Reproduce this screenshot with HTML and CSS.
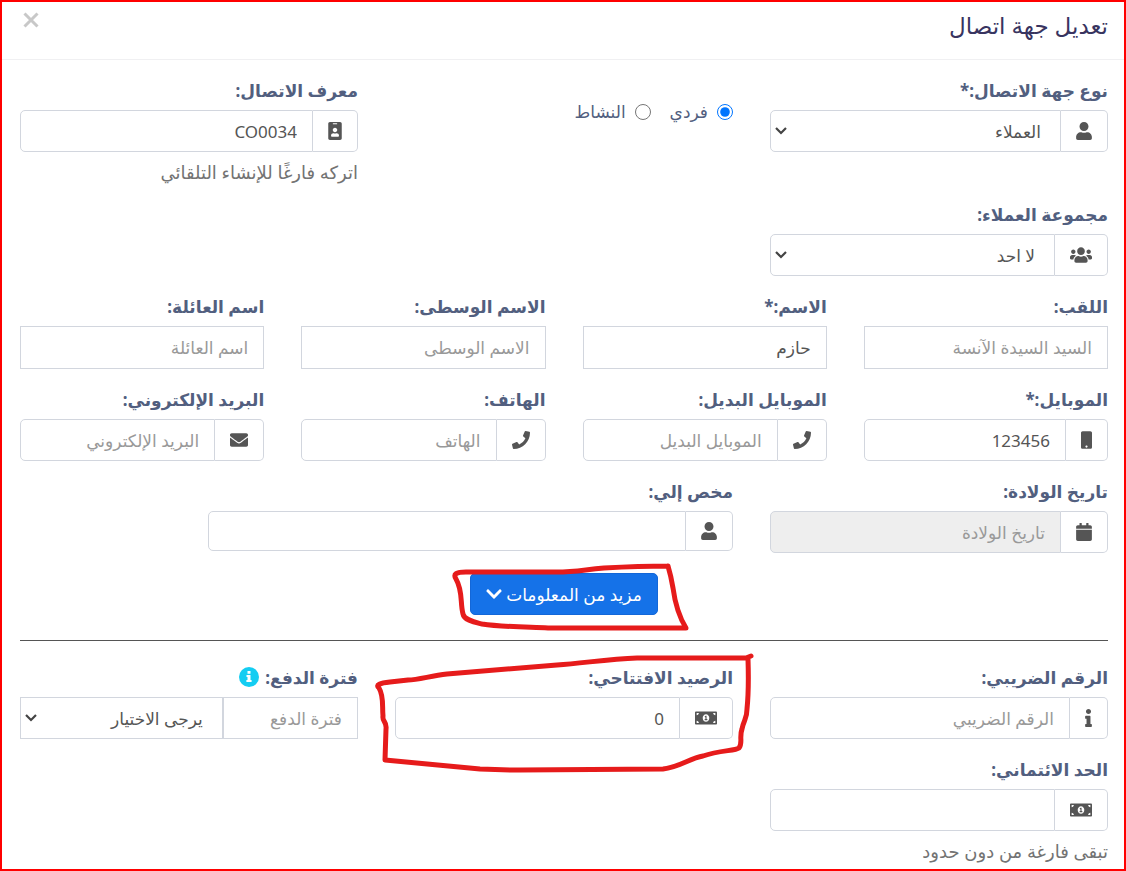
FILE: index.html
```html
<!DOCTYPE html>
<html lang="ar" dir="rtl">
<head>
<meta charset="utf-8">
<meta name="viewport" content="width=device-width, initial-scale=1">
<title>تعديل جهة اتصال</title>
<link rel="stylesheet" href="styles.css">
</head>
<body>
<svg class="sprite" aria-hidden="true">
  <symbol id="user" viewBox="0 0 448 512"><path d="M224 256c70.7 0 128-57.3 128-128S294.7 0 224 0 96 57.3 96 128s57.3 128 128 128zm89.6 32h-16.7c-22.2 10.2-46.9 16-72.9 16s-50.6-5.8-72.9-16h-16.7C60.2 288 0 348.2 0 422.4V464c0 26.5 21.500 48 48 48h352c26.500 0 48-21.500 48-48v-41.600c0-74.200-60.200-134.400-134.400-134.400z"/></symbol>
  <symbol id="users" viewBox="0 0 640 512"><path d="M96 224c35.3 0 64-28.7 64-64s-28.7-64-64-64-64 28.7-64 64 28.7 64 64 64zm448 0c35.3 0 64-28.7 64-64s-28.7-64-64-64-64 28.7-64 64 28.7 64 64 64zm32 32h-64c-17.6 0-33.5 7.1-45.1 18.6 40.3 22.1 68.9 62 75.1 109.4h66c17.7 0 32-14.3 32-32v-32c0-35.3-28.7-64-64-64zm-256 0c61.9 0 112-50.1 112-112S381.9 32 320 32 208 82.1 208 144s50.1 112 112 112zm76.800 32h-8.300c-20.800 10-43.900 16-68.500 16s-47.600-6-68.500-16h-8.300C179.600 288 128 339.600 128 403.200V432c0 26.500 21.500 48 48 48h288c26.500 0 48-21.500 48-48v-28.800c0-63.600-51.600-115.200-115.200-115.200zm-223.700-13.400C161.500 263.100 145.600 256 128 256H64c-35.300 0-64 28.700-64 64v32c0 17.700 14.300 32 32 32h65.900c6.300-47.400 34.900-87.300 75.200-109.400z"/></symbol>
  <symbol id="badge" viewBox="0 0 384 512"><path d="M336 0H48C21.500 0 0 21.500 0 48v416c0 26.500 21.500 48 48 48h288c26.500 0 48-21.500 48-48V48c0-26.500-21.500-48-48-48zM144 32h96c8.800 0 16 7.200 16 16s-7.200 16-16 16h-96c-8.800 0-16-7.200-16-16s7.200-16 16-16zm48 128c35.300 0 64 28.700 64 64s-28.700 64-64 64-64-28.700-64-64 28.700-64 64-64zm112 236.800c0 10.600-10 19.200-22.400 19.200H102.400C90 416 80 407.400 80 396.800v-19.200c0-31.800 30.100-57.600 67.200-57.600h5c12.300 5.100 25.700 8 39.800 8s27.600-2.900 39.800-8h5c37.100 0 67.200 25.800 67.200 57.600v19.200z"/></symbol>
  <symbol id="mobile" viewBox="0 0 320 512"><path d="M272 0H48C21.500 0 0 21.500 0 48v416c0 26.500 21.500 48 48 48h224c26.500 0 48-21.500 48-48V48c0-26.500-21.500-48-48-48zM160 480c-17.700 0-32-14.300-32-32s14.300-32 32-32 32 14.300 32 32-14.300 32-32 32z"/></symbol>
  <symbol id="phone" viewBox="0 0 512 512"><path d="M493.400 24.600l-104-24c-11.300-2.600-22.900 3.300-27.500 13.900l-48 112c-4.200 9.800-1.400 21.300 6.900 28l60.600 49.600c-36 76.700-98.900 140.500-177.200 177.200l-49.600-60.600c-6.800-8.300-18.200-11.100-28-6.900l-112 48C3.900 366.500-2 378.100.6 389.400l24 104C27.100 504.200 36.700 512 48 512c256.100 0 464-207.500 464-464 0-11.200-7.700-20.900-18.600-23.400z"/></symbol>
  <symbol id="envelope" viewBox="0 0 512 512"><path d="M502.300 190.800c3.900-3.100 9.700-.2 9.700 4.700V400c0 26.500-21.500 48-48 48H48c-26.500 0-48-21.500-48-48V195.600c0-5 5.700-7.800 9.700-4.700 22.400 17.400 52.100 39.500 154.100 113.600 21.100 15.400 56.700 47.800 92.200 47.600 35.700.3 72-32.800 92.300-47.600 102-74.100 131.600-96.300 154-113.700zM256 320c23.200.4 56.600-29.200 73.400-41.400 132.700-96.300 142.800-104.700 173.400-128.700 5.800-4.500 9.200-11.500 9.200-18.900v-19c0-26.500-21.500-48-48-48H48c-26.500 0-48 21.500-48 48v19c0 7.400 3.400 14.300 9.200 18.900 30.600 23.900 40.700 32.400 173.400 128.700 16.800 12.200 50.200 41.800 73.400 41.400z"/></symbol>
  <symbol id="calendar" viewBox="0 0 448 512"><path d="M0 192h448v272c0 26.500-21.500 48-48 48H48c-26.500 0-48-21.500-48-48zm448-32v-48c0-26.500-21.500-48-48-48h-48V12c0-6.600-5.400-12-12-12h-40c-6.600 0-12 5.400-12 12v52H160V12c0-6.600-5.400-12-12-12h-40c-6.600 0-12 5.400-12 12v52H48C21.500 64 0 85.500 0 112v48z"/></symbol>
  <symbol id="info" viewBox="0 0 192 512"><path d="M20 424h20V280H20c-11 0-20-9-20-20v-48c0-11 9-20 20-20h112c11 0 20 9 20 20v212h20c11 0 20 9 20 20v48c0 11-9 20-20 20H20c-11 0-20-9-20-20v-48c0-11 9-20 20-20zM96 0C56.200 0 24 32.200 24 72s32.200 72 72 72 72-32.200 72-72S135.800 0 96 0z"/></symbol>
  <symbol id="money" viewBox="0 0 640 512"><path d="M352 288h-16v-88c0-4.420-3.580-8-8-8h-13.580c-4.740 0-9.370 1.400-13.310 4.030l-15.330 10.220a8 8 0 0 0-2.220 11.090l8.880 13.310a8 8 0 0 0 11.090 2.220l.47-.31V288h-16c-4.420 0-8 3.580-8 8v16c0 4.420 3.580 8 8 8h64c4.420 0 8-3.580 8-8v-16c0-4.420-3.580-8-8-8zM608 64H32C14.330 64 0 78.330 0 96v320c0 17.670 14.330 32 32 32h576c17.670 0 32-14.330 32-32V96c0-17.670-14.330-32-32-32zM48 400v-64c35.350 0 64 28.650 64 64H48zm0-224v-64h64c0 35.350-28.650 64-64 64zm272 192c-53.020 0-96-50.150-96-112 0-61.860 42.980-112 96-112s96 50.130 96 112c0 61.870-43 112-96 112zm272 32h-64c0-35.350 28.650-64 64-64v64zm0-224c-35.350 0-64-28.650-64-64h64v64z"/></symbol>
  <symbol id="chevron" viewBox="0 0 448 512"><path d="M207 381.500L12.700 187.100c-9.400-9.400-9.400-24.500 0-33.900l22.700-22.700c9.300-9.300 24.500-9.300 33.900 0L224 284.500l154.700-154c9.400-9.300 24.600-9.300 33.900 0l22.700 22.700c9.400 9.400 9.400 24.500 0 33.900L241 381.500c-9.400 9.400-24.600 9.400-34 0z"/></symbol>
</svg>

<main class="modal">
  <header class="modal-header">
    <h1 class="modal-title">تعديل جهة اتصال</h1>
    <button class="close" type="button" aria-label="إغلاق"><svg class="close-icon" viewBox="0 0 16 16"><path d="M1.500 1.500l13 13M14.500 1.500l-13 13"/></svg></button>
  </header>

  <form class="modal-body">
    <div class="grid">
      <div class="field third">
        <label for="type">نوع جهة الاتصال:*</label>
        <div class="group">
          <span class="addon"><svg class="icon w16"><use href="#user"/></svg></span>
          <select id="type" class="control"><option>العملاء</option></select>
        </div>
      </div>
      <div class="third radios">
        <label class="radio"><input type="radio" name="kind" checked>فردي</label>
        <label class="radio"><input type="radio" name="kind">النشاط</label>
      </div>
      <div class="field third">
        <label for="cid">معرف الاتصال:</label>
        <div class="group">
          <span class="addon"><svg class="icon w14"><use href="#badge"/></svg></span>
          <input id="cid" class="control" type="text" value="CO0034">
        </div>
        <p class="help">اتركه فارغًا للإنشاء التلقائي</p>
      </div>

      <div class="field third row-start">
        <label for="cgroup">مجموعة العملاء:</label>
        <div class="group">
          <span class="addon"><svg class="icon w22"><use href="#users"/></svg></span>
          <select id="cgroup" class="control"><option>لا احد</option></select>
        </div>
      </div>

      <div class="field quarter row-start">
        <label for="prefix">اللقب:</label>
        <input id="prefix" class="control" type="text" placeholder="السيد السيدة الآنسة">
      </div>
      <div class="field quarter">
        <label for="first">الاسم:*</label>
        <input id="first" class="control" type="text" value="حازم">
      </div>
      <div class="field quarter">
        <label for="middle">الاسم الوسطى:</label>
        <input id="middle" class="control" type="text" placeholder="الاسم الوسطى">
      </div>
      <div class="field quarter">
        <label for="last">اسم العائلة:</label>
        <input id="last" class="control" type="text" placeholder="اسم العائلة">
      </div>

      <div class="field quarter">
        <label for="mob">الموبايل:*</label>
        <div class="group">
          <span class="addon"><svg class="icon w11"><use href="#mobile"/></svg></span>
          <input id="mob" class="control" type="text" value="123456">
        </div>
      </div>
      <div class="field quarter">
        <label for="alt">الموبايل البديل:</label>
        <div class="group">
          <span class="addon"><svg class="icon w18"><use href="#phone"/></svg></span>
          <input id="alt" class="control" type="text" placeholder="الموبايل البديل">
        </div>
      </div>
      <div class="field quarter">
        <label for="tel">الهاتف:</label>
        <div class="group">
          <span class="addon"><svg class="icon w18"><use href="#phone"/></svg></span>
          <input id="tel" class="control" type="text" placeholder="الهاتف">
        </div>
      </div>
      <div class="field quarter">
        <label for="mail">البريد الإلكتروني:</label>
        <div class="group">
          <span class="addon"><svg class="icon w18"><use href="#envelope"/></svg></span>
          <input id="mail" class="control" type="text" placeholder="البريد الإلكتروني">
        </div>
      </div>

      <div class="field third">
        <label for="dob">تاريخ الولادة:</label>
        <div class="group">
          <span class="addon"><svg class="icon w16"><use href="#calendar"/></svg></span>
          <input id="dob" class="control" type="text" placeholder="تاريخ الولادة" readonly>
        </div>
      </div>
      <div class="field half">
        <label for="assigned">مخص إلي:</label>
        <div class="group short">
          <span class="addon"><svg class="icon w16"><use href="#user"/></svg></span>
          <input id="assigned" class="control" type="text">
        </div>
      </div>
    </div>

    <div class="more">
      <div class="marked">
        <button class="btn" type="button">مزيد من المعلومات <svg class="chevron"><use href="#chevron"/></svg></button>
        <svg class="mark mark-button" viewBox="0 0 246 70" aria-hidden="true"><path d="M218 5C190 5 172 6 154 7C132 9 126 11 106 11H16C6 11 3 13 6 18C13 30 10 42 13 53C14 59 24 61 32 63C52 66 76 66 98 67H236C228 54 225 42 223 27Q221 15 218 5"/></svg>
      </div>
    </div>

    <hr class="rule">

    <div class="grid">
      <div class="field third">
        <label for="tax">الرقم الضريبي:</label>
        <div class="group">
          <span class="addon"><svg class="icon w7"><use href="#info"/></svg></span>
          <input id="tax" class="control" type="text" placeholder="الرقم الضريبي">
        </div>
      </div>
      <div class="field third marked">
        <label for="opening">الرصيد الافتتاحي:</label>
        <div class="group">
          <span class="addon"><svg class="icon w22"><use href="#money"/></svg></span>
          <input id="opening" class="control" type="text" value="0">
        </div>
        <svg class="mark mark-field" viewBox="0 0 390 130" aria-hidden="true"><path d="M381 7L376 9H267C238 10 215 14 187 16L77 25C60 27 48 31 38 31L20 33C10 34 5 36 9 39C14 47 12 57 13 67C12 73 17 72 16 80L15 111L110 120Q130 121 150 121L293 120C310 118 320 109 333 107C350 101 365 102 369 99C373 94 369 88 372 80C374 70 377 70 377 60Q379 40 378 10"/></svg>
      </div>
      <div class="field third">
        <div class="label-row">
          <label for="term">فترة الدفع:</label>
          <svg class="tip" viewBox="0 0 20 20" role="img" aria-label="معلومات"><circle cx="10" cy="10" r="10" fill="#14cdf2"/><path fill="#fff" d="M8.500 4h3v2.800h-3zM7.500 8h4v5h1.100v2H7.400v-2h1.100V10h-1z"/></svg>
        </div>
        <div class="pair">
          <input id="term" class="control" type="text" placeholder="فترة الدفع">
          <select class="control" aria-label="نوع الفترة"><option>يرجى الاختيار</option></select>
        </div>
      </div>
      <div class="field third row-start">
        <label for="limit">الحد الائتماني:</label>
        <div class="group">
          <span class="addon"><svg class="icon w22"><use href="#money"/></svg></span>
          <input id="limit" class="control" type="text">
        </div>
        <p class="help">تبقى فارغة من دون حدود</p>
      </div>
    </div>
  </form>
</main>
</body>
</html>
```

FILE: styles.css
```css
* { box-sizing: border-box; }

body {
  margin: 0;
  background: #fff;
  color: #555;
  font-family: "Noto Sans", "DejaVu Sans", sans-serif;
  font-size: 17px;
  line-height: 24px;
}

.sprite { display: none; }

.modal {
  min-height: 100vh;
  border: 2px solid #f00;
}

.modal-header {
  display: flex;
  justify-content: space-between;
  align-items: flex-start;
  padding: 7px 16px 18px 18px;
  border-bottom: 1px solid #f0f0f2;
}

.modal-title {
  margin: 0;
  color: #38345f;
  font-size: 23px;
  font-weight: 400;
  line-height: 32px;
}

.close {
  display: flex;
  padding: 3px;
  border: 0;
  background: none;
}

.close-icon {
  width: 16px;
  height: 16px;
  fill: none;
  stroke: #c8c8c8;
  stroke-width: 3;
}

.modal-body { padding: 19px 16px 4px 18px; }

.grid {
  display: grid;
  grid-template-columns: repeat(12, minmax(0, 1fr));
  column-gap: 37px;
  row-gap: 19px;
}

.third { grid-column: span 4; }
.quarter { grid-column: span 3; }
.half { grid-column: span 6; }
.third.row-start { grid-column: 1 / span 4; }
.quarter.row-start { grid-column: 1 / span 3; }

.field label {
  display: block;
  margin-bottom: 7px;
  color: #525f7f;
  font-weight: 700;
  white-space: nowrap;
}

.label-row {
  display: flex;
  align-items: flex-start;
  gap: 6px;
}

.tip {
  width: 20px;
  height: 20px;
  margin-top: 1px;
}

.group,
.pair {
  display: flex;
  height: 42px;
}

.group.short { height: 40px; }

.control {
  width: 100%;
  min-width: 0;
  height: 43px;
  margin: 0;
  padding: 0 15px;
  border: 1px solid #d2d6de;
  border-radius: 0;
  outline: 0;
  background-color: #fff;
  color: #555;
  font-family: inherit;
  font-size: 17px;
}

.control::placeholder { color: #999; opacity: 1; }
.control:read-only:not(select) { background-color: #eee; }

select.control {
  appearance: none;
  padding: 0 19px;
  background-image: url("data:image/svg+xml,%3Csvg xmlns='http://www.w3.org/2000/svg' viewBox='0 0 12 8'%3E%3Cpath d='M1 1l5 5 5-5' fill='none' stroke='%23444' stroke-width='2.200'/%3E%3C/svg%3E");
  background-position: left 4px center;
  background-repeat: no-repeat;
  background-size: 12px 8px;
}

.group .control {
  flex: 1;
  width: auto;
  height: 100%;
  border-radius: 5px 0 0 5px;
}

.addon {
  display: flex;
  align-items: center;
  padding: 0 15px;
  border: 1px solid #d2d6de;
  border-left: 0;
  border-radius: 0 5px 5px 0;
}

.icon { height: 18px; fill: #555; }
.w7 { width: 7px; }
.w11 { width: 11px; }
.w14 { width: 14px; }
.w16 { width: 16px; }
.w18 { width: 18px; }
.w22 { width: 22px; }

.pair .control { height: 100%; }
.pair input { width: 40%; }
.pair select { width: 60%; }

.radios {
  display: flex;
  align-items: flex-start;
  gap: 19px;
  padding-top: 21px;
}

.radio {
  display: flex;
  align-items: center;
  gap: 9px;
  color: #525f7f;
}

.radio input {
  width: 16px;
  height: 16px;
  margin: 0;
  accent-color: #0075ff;
}

.help {
  margin: 8px 0 0;
  color: #737373;
  font-size: 18px;
}

.more {
  display: flex;
  justify-content: center;
  padding-top: 20px;
}

.marked { position: relative; }

.btn {
  display: flex;
  align-items: center;
  gap: 4px;
  height: 42px;
  padding: 0 15px;
  border: 1px solid #1367d8;
  border-radius: 5px;
  background: #1572e8;
  color: #fff;
  font-family: inherit;
  font-size: 17px;
}

.chevron {
  width: 16px;
  height: 18px;
  fill: #fff;
}

.mark {
  position: absolute;
  fill: none;
  stroke: #e61b1b;
  stroke-linecap: round;
  stroke-linejoin: round;
  pointer-events: none;
}

.mark-button {
  top: -12px;
  left: -20px;
  width: 246px;
  height: 70px;
  stroke-width: 5;
}

.mark-field {
  top: -17px;
  right: -27px;
  width: 390px;
  height: 130px;
  stroke-width: 5;
}

.rule {
  height: 1px;
  margin: 25px 0;
  border: 0;
  background: #555;
}
```
